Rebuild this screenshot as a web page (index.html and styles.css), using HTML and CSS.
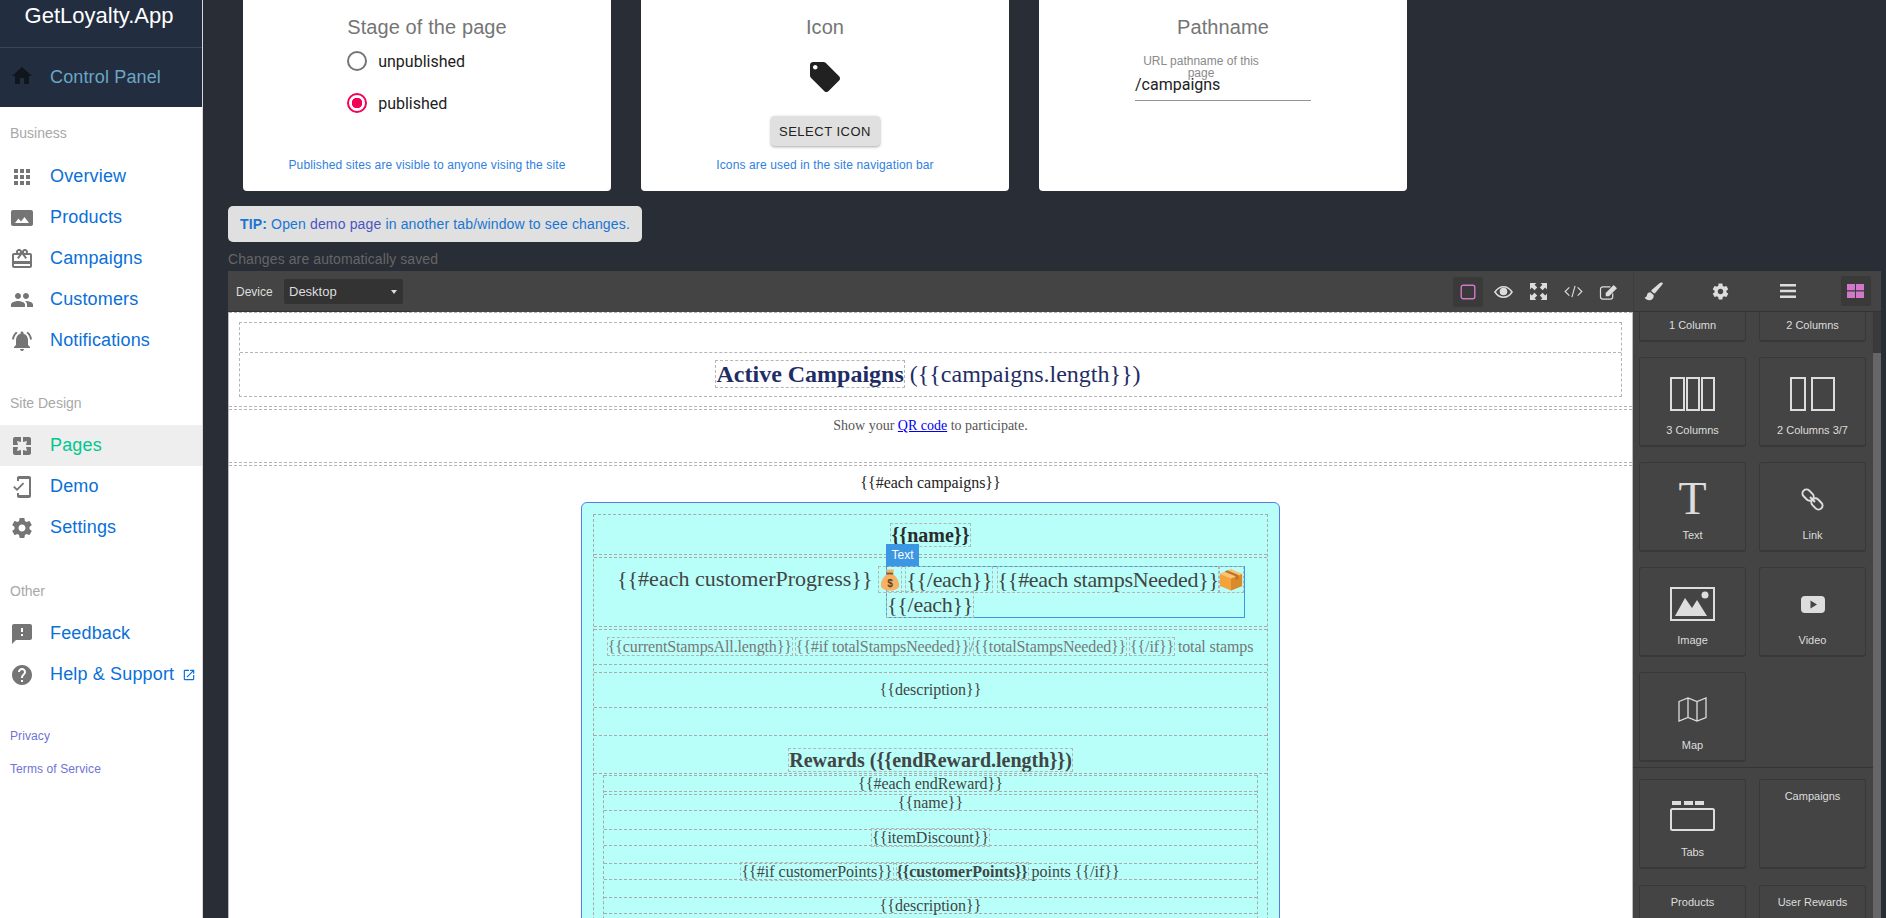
FILE: index.html
```html
<!DOCTYPE html>
<html lang="en">
<head>
    <meta charset="UTF-8">
    <title>GetLoyalty.App - Pages</title>
    <link rel="stylesheet" href="styles.css">
</head>
<body>
    <aside class="sidebar">
        <div class="brand">GetLoyalty.App</div>
        <a class="control-link">
            <svg class="nav-icon dark" viewBox="0 0 24 24"><path d="M10 20v-6h4v6h5v-8h3L12 3 2 12h3v8z"/></svg>
            Control Panel
        </a>

        <div class="nav-title first">Business</div>
        <a class="nav-item"><svg class="nav-icon" viewBox="0 0 24 24"><path d="M4 8h4V4H4v4zm6 12h4v-4h-4v4zm-6 0h4v-4H4v4zm0-6h4v-4H4v4zm6 0h4v-4h-4v4zm6-10v4h4V4h-4zm-6 4h4V4h-4v4zm6 6h4v-4h-4v4zm0 6h4v-4h-4v4z"/></svg>Overview</a>
        <a class="nav-item"><svg class="nav-icon" viewBox="0 0 24 24"><path d="M23 18V6c0-1.1-.9-2-2-2H3c-1.1 0-2 .9-2 2v12c0 1.1.9 2 2 2h18c1.1 0 2-.9 2-2zM8.5 12.5l2.5 3.01L14.5 11l4.5 6H5l3.5-4.5z"/></svg>Products</a>
        <a class="nav-item"><svg class="nav-icon" viewBox="0 0 24 24"><path d="M20 6h-2.18c.11-.31.18-.65.18-1 0-1.66-1.34-3-3-3-1.05 0-1.96.54-2.5 1.35l-.5.67-.5-.68C10.96 2.54 10.05 2 9 2 7.34 2 6 3.34 6 5c0 .35.07.69.18 1H4c-1.11 0-1.99.89-1.99 2L2 19c0 1.11.89 2 2 2h16c1.11 0 2-.89 2-2V8c0-1.11-.89-2-2-2zm-5-2c.55 0 1 .45 1 1s-.45 1-1 1-1-.45-1-1 .45-1 1-1zM9 4c.55 0 1 .45 1 1s-.45 1-1 1-1-.45-1-1 .45-1 1-1zm11 15H4v-2h16v2zm0-5H4V8h5.08L7 10.83 8.62 12 11 8.76l1-1.36 1 1.36L15.38 12 17 10.83 14.92 8H20v6z"/></svg>Campaigns</a>
        <a class="nav-item"><svg class="nav-icon" viewBox="0 0 24 24"><path d="M16 11c1.66 0 2.99-1.34 2.99-3S17.66 5 16 5c-1.66 0-3 1.34-3 3s1.34 3 3 3zm-8 0c1.66 0 2.99-1.34 2.99-3S9.66 5 8 5C6.34 5 5 6.34 5 8s1.34 3 3 3zm0 2c-2.33 0-7 1.17-7 3.5V19h14v-2.5c0-2.33-4.67-3.5-7-3.5zm8 0c-.29 0-.62.02-.97.05 1.16.84 1.97 1.97 1.97 3.45V19h6v-2.5c0-2.33-4.67-3.5-7-3.5z"/></svg>Customers</a>
        <a class="nav-item"><svg class="nav-icon" viewBox="0 0 24 24"><path d="M7.58 4.08L6.15 2.65C3.75 4.48 2.17 7.3 2.03 10.5h2c.15-2.65 1.51-4.97 3.55-6.42zm12.39 6.42h2c-.15-3.2-1.73-6.02-4.12-7.85l-1.42 1.43c2.02 1.45 3.39 3.77 3.54 6.42zM18 11c0-3.07-1.64-5.64-4.5-6.32V4c0-.83-.67-1.5-1.5-1.5s-1.5.67-1.5 1.5v.68C7.63 5.36 6 7.92 6 11v5l-2 2v1h16v-1l-2-2v-5zm-6 11c.14 0 .27-.01.4-.04.65-.14 1.18-.58 1.44-1.18.1-.24.15-.5.15-.78h-4c.01 1.1.9 2 2.01 2z"/></svg>Notifications</a>

        <div class="nav-title">Site Design</div>
        <a class="nav-item active"><svg class="nav-icon" viewBox="0 0 24 24"><path d="M3 5v6h5L7 7l4 1V3H5c-1.1 0-2 .9-2 2zm5 8H3v6c0 1.1.9 2 2 2h6v-5l-4 1 1-4zm9 4l-4-1v5h6c1.1 0 2-.9 2-2v-6h-5l1 4zm2-14h-6v5l4-1-1 4h5V5c0-1.1-.9-2-2-2z"/></svg>Pages</a>
        <a class="nav-item"><svg class="nav-icon" viewBox="0 0 24 24"><path d="M19 1H9c-1.1 0-2 .9-2 2v3h2V4h10v16H9v-2H7v3c0 1.1.9 2 2 2h10c1.1 0 2-.9 2-2V3c0-1.1-.9-2-2-2zM7.01 13.47l-2.55-2.55-1.27 1.27L7 16l7.19-7.19-1.27-1.27z"/></svg>Demo</a>
        <a class="nav-item"><svg class="nav-icon" viewBox="0 0 24 24"><path d="M19.43 12.98c.04-.32.07-.64.07-.98s-.03-.66-.07-.98l2.11-1.65c.19-.15.24-.42.12-.64l-2-3.46c-.12-.22-.39-.3-.61-.22l-2.49 1c-.52-.4-1.08-.73-1.69-.98l-.38-2.65C14.46 2.18 14.25 2 14 2h-4c-.25 0-.46.18-.49.42l-.38 2.65c-.61.25-1.17.59-1.69.98l-2.49-1c-.23-.09-.49 0-.61.22l-2 3.46c-.13.22-.07.49.12.64l2.11 1.65c-.04.32-.07.65-.07.98s.03.66.07.98l-2.11 1.65c-.19.15-.24.42-.12.64l2 3.46c.12.22.39.3.61.22l2.49-1c.52.4 1.08.73 1.69.98l.38 2.65c.03.24.24.42.49.42h4c.25 0 .46-.18.49-.42l.38-2.65c.61-.25 1.17-.59 1.69-.98l2.49 1c.23.09.49 0 .61-.22l2-3.46c.12-.22.07-.49-.12-.64l-2.11-1.65zM12 15.5c-1.93 0-3.5-1.57-3.5-3.5s1.57-3.5 3.5-3.5 3.5 1.57 3.5 3.5-1.57 3.5-3.5 3.5z"/></svg>Settings</a>

        <div class="nav-title other">Other</div>
        <a class="nav-item"><svg class="nav-icon" viewBox="0 0 24 24"><path d="M20 2H4c-1.1 0-1.99.9-1.99 2L2 22l4-4h14c1.1 0 2-.9 2-2V4c0-1.1-.9-2-2-2zm-7 12h-2v-2h2v2zm0-4h-2V6h2v4z"/></svg>Feedback</a>
        <a class="nav-item"><svg class="nav-icon" viewBox="0 0 24 24"><path d="M12 2C6.48 2 2 6.48 2 12s4.48 10 10 10 10-4.48 10-10S17.52 2 12 2zm1 17h-2v-2h2v2zm2.07-7.75l-.9.92C13.45 12.9 13 13.5 13 15h-2v-.5c0-1.1.45-2.1 1.17-2.83l1.24-1.26c.37-.36.59-.86.59-1.41 0-1.1-.9-2-2-2s-2 .9-2 2H8c0-2.21 1.79-4 4-4s4 1.79 4 4c0 .88-.36 1.68-.93 2.25z"/></svg>Help &amp; Support<svg class="ext-icon" viewBox="0 0 24 24"><path d="M19 19H5V5h7V3H5c-1.11 0-2 .89-2 2v14c0 1.1.89 2 2 2h14c1.1 0 2-.9 2-2v-7h-2v7zM14 3v2h3.59l-9.83 9.83 1.41 1.41L19 6.41V10h2V3h-7z"/></svg></a>

        <a class="small-link privacy">Privacy</a>
        <a class="small-link">Terms of Service</a>
    </aside>

    <main class="main">
        <section class="cards">
            <div class="card">
                <div class="stage">
                    <h3 class="card-title">Stage of the page</h3>
                    <div class="radio-row"><span class="radio"></span>unpublished</div>
                    <div class="radio-row"><span class="radio checked"></span>published</div>
                </div>
                <p class="card-help">Published sites are visible to anyone vising the site</p>
            </div>
            <div class="card">
                <h3 class="card-title">Icon</h3>
                <svg class="tag-icon" viewBox="0 0 24 24"><path d="M21.41 11.58l-9-9C12.05 2.22 11.55 2 11 2H4c-1.1 0-2 .9-2 2v7c0 .55.22 1.05.59 1.42l9 9c.36.36.86.58 1.41.58.55 0 1.05-.22 1.41-.59l7-7c.37-.36.59-.86.59-1.41 0-.55-.23-1.06-.59-1.42zM5.5 7C4.67 7 4 6.33 4 5.5S4.67 4 5.5 4 7 4.67 7 5.5 6.33 7 5.5 7z"/></svg>
                <button class="select-btn">SELECT ICON</button>
                <p class="card-help">Icons are used in the site navigation bar</p>
            </div>
            <div class="card">
                <h3 class="card-title">Pathname</h3>
                <div class="path-field">
                    <label class="path-label">URL pathname of this page</label>
                    <input class="path-input" type="text" value="/campaigns">
                </div>
            </div>
        </section>

        <div class="tip"><b>TIP:</b>&nbsp;Open <span class="tip-link">demo page</span> in another tab/window to see changes.</div>
        <div class="saved">Changes are automatically saved</div>

        <section class="editor">
            <div class="editor-left">
                <div class="toolbar">
                    <span class="device-label">Device</span>
                    <div class="device-select">Desktop</div>
                    <div class="tool-group">
                        <span class="tool on">
                            <svg viewBox="0 0 16 16" width="16" height="16"><rect x="1.2" y="1.2" width="13.6" height="13.6" rx="2" fill="none" stroke="#d278c9" stroke-width="1.4"/></svg>
                        </span>
                        <span class="tool">
                            <svg viewBox="0 0 20 14" width="19" height="14"><path d="M1 7c2.500-3.700 5.500-5.500 9-5.500s6.500 1.800 9 5.500c-2.500 3.700-5.500 5.500-9 5.500S3.500 10.700 1 7z" fill="none" stroke="#ddd" stroke-width="1.600"/><circle cx="10" cy="6.500" r="4" fill="#ddd"/></svg>
                        </span>
                        <span class="tool">
                            <svg viewBox="0 0 16 16" width="17" height="17"><path d="M0 0h6L4.300 1.700 6.800 4.200 4.200 6.800 1.700 4.300 0 6zM16 0v6l-1.700-1.700-2.500 2.500-2.600-2.600 2.500-2.500L10 0zM0 16v-6l1.700 1.700 2.500-2.500 2.600 2.600-2.500 2.500L6 16zM16 16h-6l1.700-1.700-2.500-2.500 2.600-2.600 2.500 2.500L16 10z" fill="#ddd"/></svg>
                        </span>
                        <span class="tool">
                            <svg viewBox="0 0 20 14" width="19" height="13"><path d="M5.500 2.500 1 7l4.500 4.500M14.500 2.500 19 7l-4.500 4.500M11.700 1 8.300 13" fill="none" stroke="#ddd" stroke-width="1.200"/></svg>
                        </span>
                        <span class="tool">
                            <svg viewBox="0 0 20 17" width="19" height="16"><path d="M12 3H4a2.500 2.500 0 0 0-2.500 2.500v8A2.500 2.500 0 0 0 4 16h8a2.500 2.500 0 0 0 2.500-2.500V10" fill="none" stroke="#ddd" stroke-width="1.300"/><path d="M7 9.500 15.500 1 19 4.500 10.500 13H7z" fill="#ddd"/></svg>
                        </span>
                    </div>
                </div>

                <div class="canvas">
                    <div class="sec sec-head">
                        <div class="head-box">
                            <div class="head-empty"></div>
                            <div class="head-title"><b class="mark">Active Campaigns</b> ({{campaigns.length}})</div>
                        </div>
                    </div>
                    <div class="sec sec-qr">
                        <p class="qr-text">Show your <a class="qr-link">QR code</a> to participate.</p>
                    </div>
                    <div class="sec-list">
                        <div class="each-line">{{#each campaigns}}</div>
                        <div class="camp-card">
                            <div class="camp-rows">
                                <div class="row row-name"><b class="mark">{{name}}</b></div>
                                <div class="row row-progress">
                                    <span class="progress-left">{{#each customerProgress}}</span>
                                    <div class="selected">
                                        <span class="selected-tag">Text</span>
                                        <span class="mark emoji-box bag-box">
                                            <svg class="emoji" viewBox="0 0 24 26"><path d="M9 7 7.500 2h9L15 7c4 3 7 7.500 7 12 0 4-4 6-10 6S2 23 2 19c0-4.500 3-9 7-12z" fill="#f5b265"/><rect x="8.500" y="5.500" width="7" height="2" fill="#7a5a3a"/><text x="12" y="21" class="emoji-sign">$</text></svg>
                                        </span>
                                        <span class="mark">{{/each}}</span> <span class="mark">{{#each stampsNeeded}}</span><span class="mark emoji-box">
                                            <svg class="emoji" viewBox="0 0 26 26"><path d="M13 2 25 7v13l-12 5-12-5V7z" fill="#f2a33c"/><path d="M13 12 25 7v13l-12 5z" fill="#d98a2b"/><path d="M1 7l12 5 12-5-12-5z" fill="#f9c476"/><path d="M6 4.500 18 9.500v4l3-1.300V8L9 3z" fill="#b9762a"/></svg>
                                        </span><br><span class="mark">{{/each}}</span>
                                    </div>
                                </div>
                                <div class="row row-stamps"><span class="mark">{{currentStampsAll.length}}</span> <span class="mark">{{#if totalStampsNeeded}}</span>/<span class="mark">{{totalStampsNeeded}}</span> <span class="mark">{{/if}}</span> total stamps</div>
                                <div class="row row-desc">{{description}}</div>
                                <div class="row row-rewards"><b class="mark">Rewards ({{endReward.length}})</b></div>
                                <div class="reward-box">
                                    <div class="reward-row first-row">{{#each endReward}}</div>
                                    <div class="reward-row">{{name}}</div>
                                    <div class="reward-row spaced"><span class="mark">{{itemDiscount}}</span></div>
                                    <div class="reward-row spaced"><span class="mark">{{#if customerPoints}}</span> <b class="mark">{{customerPoints}}</b> points {{/if}}</div>
                                    <div class="reward-row spaced">{{description}}</div>
                                </div>
                            </div>
                        </div>
                    </div>
                </div>
            </div>

            <div class="panel">
                <div class="panel-bar">
                    <span class="tool">
                        <svg viewBox="0 0 18 18" width="19" height="19"><path d="M17.500.8c-.8-.7-1.800-.5-2.800.3L7.500 7.300c-.4.400-.6.800-.7 1.300l2.800 2.400c.500-.1.900-.3 1.200-.7l6.400-7.800c.7-.8 1-1.500.3-1.700zM6 9.700c-1.800 0-3 1.200-3.200 2.800-.2 1.300-1 2-2.300 2.200 1.200 2 3.200 2.800 5.200 2.500 2.500-.4 3.800-2.200 3.400-4.800z" fill="#ddd"/></svg>
                    </span>
                    <span class="tool">
                        <svg viewBox="0 0 24 24" width="19" height="19"><path d="M19.430 12.980c.04-.32.07-.64.07-.98s-.03-.66-.07-.98l2.110-1.650c.19-.15.24-.42.12-.64l-2-3.460c-.12-.22-.39-.3-.61-.22l-2.490 1c-.52-.4-1.080-.73-1.690-.98l-.38-2.650C14.460 2.180 14.250 2 14 2h-4c-.25 0-.46.18-.49.42l-.38 2.650c-.61.25-1.170.59-1.690.98l-2.490-1c-.23-.09-.49 0-.61.22l-2 3.460c-.13.22-.07.49.12.64l2.110 1.650c-.04.32-.07.65-.07.98s.03.66.07.98l-2.110 1.650c-.19.15-.24.42-.12.64l2 3.460c.12.22.39.3.61.22l2.490-1c.52.4 1.080.73 1.690.98l.38 2.650c.03.24.24.42.49.42h4c.25 0 .46-.18.49-.42l.38-2.650c.61-.25 1.170-.59 1.690-.98l2.490 1c.23.09.49 0 .61-.22l2-3.460c.12-.22.07-.49-.12-.64l-2.110-1.650zM12 15.500c-1.930 0-3.500-1.570-3.500-3.500s1.570-3.500 3.500-3.500 3.500 1.570 3.500 3.500-1.570 3.500-3.500 3.500z" fill="#ddd"/></svg>
                    </span>
                    <span class="tool">
                        <svg viewBox="0 0 16 14" width="16" height="14"><path d="M0 0h16v2.500H0zM0 5.700h16v2.500H0zM0 11.400h16v2.500H0z" fill="#ddd"/></svg>
                    </span>
                    <span class="tool on">
                        <svg viewBox="0 0 17 14" width="17" height="14"><path d="M0 0h8v6.300H0zM9 0h8v6.300H9zM0 7.500h8V14H0zM9 7.500h8V14H9z" fill="#d278c9"/></svg>
                    </span>
                </div>
                <div class="panel-body">
                    <div class="blocks">
                        <div class="blocks-grid scrolled">
                            <div class="block"><span class="block-icon"></span>1 Column</div>
                            <div class="block"><span class="block-icon"></span>2 Columns</div>
                            <div class="block"><span class="block-icon">
                                <svg viewBox="0 0 45 34" width="45" height="34"><path d="M1 1h13v32H1zM17 1h12v32H17zM32 1h12v32H32z" class="line"/></svg>
                            </span>3 Columns</div>
                            <div class="block"><span class="block-icon">
                                <svg viewBox="0 0 45 34" width="45" height="34"><path d="M1 1h14v32H1zM22 1h22v32H22z" class="line"/></svg>
                            </span>2 Columns 3/7</div>
                            <div class="block"><span class="block-icon"><span class="t-glyph">T</span></span>Text</div>
                            <div class="block"><span class="block-icon">
                                <svg viewBox="0 0 23 23" width="23" height="23"><g class="line" transform="rotate(45 11.500 11.500)"><rect x="-1" y="7.500" width="12.500" height="8" rx="4"/><rect x="11.500" y="7.500" width="12.500" height="8" rx="4"/><path d="M8 11.500h7"/></g></svg>
                            </span>Link</div>
                            <div class="block"><span class="block-icon">
                                <svg viewBox="0 0 45 34" width="45" height="34"><path d="M1 1h43v32H1z" class="line"/><path d="M5 29 15 11l7 10 5-8 10 16z" fill="#ddd"/><circle cx="35" cy="8" r="3.500" fill="#ddd"/></svg>
                            </span>Image</div>
                            <div class="block"><span class="block-icon">
                                <svg viewBox="0 0 24 17" width="24" height="17"><rect width="24" height="17" rx="4" fill="#ddd"/><path d="M9.500 4.500 16 8.500 9.500 12.500z" fill="#444"/></svg>
                            </span>Video</div>
                            <div class="block"><span class="block-icon">
                                <svg viewBox="0 0 29 25" width="29" height="25"><path d="M1 4.500 10 1l9 3.500L28 1v19.500L19 24l-9-3.500L1 24zM10 1v19.500M19 4.500V24" class="line thin"/></svg>
                            </span>Map</div>
                        </div>
                        <div class="blocks-grid second">
                            <div class="block"><span class="block-icon">
                                <svg viewBox="0 0 45 30" width="45" height="30"><path d="M2 0h9v4H2zM14 0h9v4h-9zM25 0h9v4h-9z" fill="#ddd"/><rect x="1" y="8" width="43" height="21" rx="1.500" class="line"/></svg>
                            </span>Tabs</div>
                            <div class="block plain">Campaigns</div>
                            <div class="block plain">Products</div>
                            <div class="block plain">User Rewards</div>
                        </div>
                    </div>
                    <div class="scrollbar"><div class="scroll-thumb"></div></div>
                </div>
            </div>
        </section>
    </main>
</body>
</html>
```

FILE: styles.css
```css
* {
    box-sizing: border-box;
}

html, body {
    height: 100%;
}

body {
    margin: 0;
    display: flex;
    height: 918px;
    overflow: hidden;
    background: #292d36;
    font-family: "Liberation Sans", Arial, sans-serif;
    color: #333;
}

/* sidebar */
.sidebar {
    width: 203px;
    flex-shrink: 0;
    background: #ffffff;
    border-right: 1px solid #d8d8d8;
    display: flex;
    flex-direction: column;
}

.brand {
    height: 48px;
    padding-right: 4px;
    background: #222d3f;
    border-bottom: 1px solid #3a4658;
    color: #ffffff;
    font-size: 22px;
    line-height: 31px;
    text-align: center;
}

.control-link {
    height: 59px;
    display: flex;
    align-items: center;
    background: #222d3f;
    color: #6ba6c4;
    font-size: 18px;
    letter-spacing: 0.15px;
}

.nav-icon {
    width: 24px;
    height: 24px;
    margin: 0 16px 0 10px;
    fill: #757575;
    flex-shrink: 0;
}

.nav-icon.dark {
    fill: #11151c;
    margin-top: -4px;
}

.nav-title {
    margin: 34px 0 14px 10px;
    height: 16px;
    font-size: 14px;
    line-height: 16px;
    color: #a8a8a8;
}

.nav-title.first {
    margin-top: 18px;
    margin-bottom: 15px;
}

.nav-title.other {
    margin-top: 35px;
    margin-bottom: 14px;
}

.nav-item {
    height: 41px;
    display: flex;
    align-items: center;
    color: #0a6fd8;
    font-size: 18px;
    letter-spacing: 0.15px;
}

.nav-item.active {
    background: #eeeeee;
    color: #00c78f;
}

.ext-icon {
    width: 14px;
    height: 14px;
    margin-left: 8px;
    fill: #0a6fd8;
}

.small-link {
    margin: 19px 0 0 10px;
    height: 14px;
    font-size: 12px;
    letter-spacing: 0.1px;
    line-height: 14px;
    color: #6f73d6;
}

.small-link.privacy {
    margin-top: 34px;
}

/* main */
.main {
    flex: 1;
    min-width: 0;
    padding-left: 25px;
    display: flex;
    flex-direction: column;
}

.cards {
    margin-left: 15px;
    display: flex;
    gap: 30px;
    height: 191px;
}

.card {
    width: 368px;
    background: #ffffff;
    border-radius: 0 0 4px 4px;
    display: flex;
    flex-direction: column;
    align-items: center;
    padding-top: 15px;
    position: relative;
}

.stage {
    display: flex;
    flex-direction: column;
}

.card-title {
    margin: 0;
    font-size: 20px;
    font-weight: 400;
    letter-spacing: 0.1px;
    line-height: 24px;
    color: #757575;
}

.radio-row {
    height: 42px;
    display: flex;
    align-items: center;
    font-family: Roboto, sans-serif;
    font-size: 16px;
    color: #222;
}

.stage .card-title {
    margin-bottom: 1px;
}

.radio {
    width: 20px;
    height: 20px;
    margin-right: 11px;
    border: 2px solid #757575;
    border-radius: 50%;
}

.radio.checked {
    border-color: #f50057;
    background: radial-gradient(circle, #f50057 0 5px, transparent 5.500px);
}

.card-help {
    margin: auto 0 19px;
    font-size: 12px;
    letter-spacing: 0.13px;
    line-height: 14px;
    color: #2f7fe0;
    white-space: nowrap;
}

.tag-icon {
    width: 36px;
    height: 36px;
    margin-top: 20px;
    fill: #212121;
}

.select-btn {
    width: 109px;
    height: 30px;
    margin-top: 21px;
    border: none;
    border-radius: 4px;
    background: #e0e0e0;
    box-shadow: 0 1px 3px rgba(0,0,0,0.35);
    font-family: "Liberation Sans", Arial, sans-serif;
    font-size: 13px;
    letter-spacing: 0.5px;
    color: #222;
}

.path-field {
    position: relative;
    width: 176px;
    margin-top: 16px;
}

.path-label {
    position: absolute;
    top: 0;
    left: 0;
    width: 132px;
    font-size: 12px;
    line-height: 12px;
    text-align: center;
    color: #8a8a8a;
}

.path-input {
    width: 100%;
    height: 46px;
    padding: 19px 0 6px;
    border: none;
    border-bottom: 1px solid #949494;
    background: transparent;
    font-family: Roboto, sans-serif;
    font-size: 16px;
    color: #222;
    outline: none;
}

.tip {
    width: 414px;
    height: 36px;
    margin-top: 15px;
    padding-left: 12px;
    display: flex;
    align-items: center;
    background: #e0e0e0;
    border-radius: 5px;
    font-size: 14px;
    letter-spacing: 0.15px;
    color: #1976d2;
    white-space: pre;
}

.tip-link {
    color: #4a55c0;
}

.saved {
    margin-top: 8px;
    height: 21px;
    font-size: 14px;
    letter-spacing: 0.1px;
    line-height: 19px;
    color: #666666;
}

/* editor */
.editor {
    width: 1653px;
    height: 647px;
    display: flex;
    background: #444444;
}

.editor-left {
    width: 1405px;
    display: flex;
    flex-direction: column;
}

.toolbar {
    position: relative;
    height: 41px;
    flex-shrink: 0;
    display: flex;
    align-items: center;
    padding-left: 8px;
    color: #dddddd;
}

/* dark line under the device picker */
.toolbar::after {
    content: "";
    position: absolute;
    left: 0;
    bottom: 0;
    width: 183px;
    height: 1px;
    background: #333333;
}

.device-label {
    font-size: 12px;
    width: 48px;
}

.device-select {
    position: relative;
    width: 119px;
    height: 25px;
    padding-left: 5px;
    background: #333333;
    border-radius: 2px;
    font-size: 13px;
    line-height: 25px;
}

.device-select::after {
    content: "";
    position: absolute;
    right: 6px;
    top: 11px;
    border-left: 3.500px solid transparent;
    border-right: 3.500px solid transparent;
    border-top: 4px solid #dddddd;
}

.tool-group {
    margin-left: auto;
    display: flex;
    gap: 5px;
    padding-right: 10px;
}

.tool {
    width: 30px;
    height: 30px;
    display: flex;
    align-items: center;
    justify-content: center;
    border-radius: 2px;
}

.tool.on {
    background: #3a3a3a;
}

/* canvas */
.canvas {
    flex: 1;
    min-height: 0;
    overflow: hidden;
    background: #ffffff;
    border-left: 1px solid #bbb;
    border-right: 1px solid #bbb;
    font-family: "Liberation Serif", "Times New Roman", serif;
}

.sec {
    border-top: 1px dashed #b5b5b5;
    border-bottom: 1px dashed #b5b5b5;
    margin-bottom: 2px;
}

.sec-head {
    height: 95px;
    padding: 9px 10px;
}

.head-box {
    border: 1px dashed #b5b5b5;
    height: 75px;
}

.head-empty {
    height: 30px;
    border-bottom: 1px dashed #b5b5b5;
}

.head-title {
    text-align: center;
    font-size: 24px;
    line-height: 28px;
    padding: 7px 4px 0 0;
    color: #1f2d66;
}

.mark {
    outline: 1px dashed #b5b5b5;
    outline-offset: 0;
}

.sec-qr {
    height: 54px;
    padding-top: 7px;
}

.qr-text {
    margin: 0;
    text-align: center;
    font-size: 14px;
    line-height: 17px;
    color: #555555;
}

.qr-link {
    color: #0000ee;
    text-decoration: underline;
}

.sec-list {
    border-top: 1px dashed #b5b5b5;
}

.each-line {
    text-align: center;
    font-size: 16px;
    line-height: 18px;
    padding-top: 8px;
    height: 36px;
    color: #222;
}

.camp-card {
    width: 699px;
    margin: 0 auto;
    padding: 11px 11px 0;
    height: 500px;
    background: #b8fffa;
    border: 1px solid #5a78f0;
    border-radius: 6px;
    color: #444444;
}

.camp-rows {
    border: 1px dashed #a9a9a9;
    border-bottom: none;
}

.row {
    border-bottom: 1px dashed #a9a9a9;
    text-align: center;
}

.row-name {
    height: 40px;
    margin-bottom: 2px;
    font-size: 20px;
    line-height: 23px;
    padding-top: 9px;
    color: #2b2b2b;
}

.row-progress {
    height: 70px;
    margin-bottom: 2px;
    border-top: 1px dashed #a9a9a9;
    padding: 8px 22px 0 23px;
    display: flex;
    text-align: left;
    font-size: 22px;
    line-height: 25px;
    white-space: nowrap;
}

.selected {
    position: relative;
    width: 359px;
    height: 52px;
    margin-left: auto;
    border: 1px solid #3b97e3;
    letter-spacing: -0.28px;
}

.selected-tag {
    position: absolute;
    left: -1px;
    top: -23px;
    width: 33px;
    height: 22px;
    background: #3b97e3;
    color: #ffffff;
    font-family: "Liberation Sans", Arial, sans-serif;
    font-size: 12px;
    letter-spacing: 0;
    line-height: 22px;
    text-align: center;
}

.emoji-box {
    display: inline-block;
    vertical-align: top;
    width: 24px;
    height: 25px;
    text-align: center;
}

.bag-box {
    width: 22px;
    margin-left: -8px;
}

.emoji {
    width: 24px;
    height: 25px;
    display: block;
}

.bag-box .emoji {
    width: 22px;
}

.emoji-sign {
    font-family: "Liberation Sans", Arial, sans-serif;
    font-size: 11px;
    font-weight: bold;
    text-anchor: middle;
    fill: #5a4020;
}

.row-stamps {
    height: 36px;
    border-top: 1px dashed #a9a9a9;
    padding-top: 8px;
    font-size: 16px;
    letter-spacing: -0.13px;
    line-height: 18px;
    color: #777777;
    white-space: nowrap;
}

.row-desc {
    height: 36px;
    margin-top: 7px;
    border-top: 1px dashed #a9a9a9;
    padding-top: 8px;
    font-size: 16px;
    line-height: 18px;
}

.row-rewards {
    height: 39px;
    margin-top: 27px;
    border-top: 1px dashed #a9a9a9;
    border-bottom: 1px dashed #a9a9a9;
    padding-top: 13px;
    font-size: 20px;
    line-height: 23px;
}

.reward-box {
    margin: 1px 9px 0;
    border-left: 1px dashed #a9a9a9;
    border-right: 1px dashed #a9a9a9;
    height: 200px;
}

.reward-row {
    height: 17px;
    margin-bottom: 2px;
    border-top: 1px dashed #a9a9a9;
    border-bottom: 1px dashed #a9a9a9;
    text-align: center;
    font-size: 16px;
    line-height: 15px;
    white-space: nowrap;
}

.reward-row.spaced {
    margin-top: 17px;
}

.reward-row:nth-child(3) {
    margin-top: 18px;
}

/* right panel */
.panel {
    width: 248px;
    display: flex;
    flex-direction: column;
}

.panel-bar {
    height: 41px;
    flex-shrink: 0;
    border-bottom: 1px solid #333;
    border-left: 1px solid #3d3d3d;
    display: flex;
    align-items: center;
    justify-content: space-between;
    padding: 0 10px 0 4px;
}

.panel-body {
    flex: 1;
    min-height: 0;
    display: flex;
}

.blocks {
    flex: 1;
    overflow: hidden;
}

.blocks-grid {
    display: grid;
    grid-template-columns: 107px 107px;
    grid-auto-rows: 90px;
    column-gap: 13px;
    row-gap: 15px;
    padding-left: 6px;
}

.blocks-grid.scrolled {
    margin-top: -60px;
    padding-bottom: 5px;
    border-bottom: 1px solid #353535;
}

.blocks-grid.second {
    margin-top: 11px;
    row-gap: 16px;
}

.block {
    padding-top: 10px;
    background: #444444;
    border: 1px solid #383838;
    border-bottom-width: 2px;
    border-radius: 3px;
    display: flex;
    flex-direction: column;
    align-items: center;
    font-size: 11px;
    line-height: 14px;
    color: #dddddd;
}

.block.plain {
    padding-top: 9px;
}

.block-icon {
    height: 52px;
    margin-bottom: 3px;
    display: flex;
    align-items: center;
    justify-content: center;
}

.line {
    fill: none;
    stroke: #dddddd;
    stroke-width: 2;
}

.line.thin {
    stroke-width: 1.300;
}

.t-glyph {
    font-family: "Liberation Serif", serif;
    font-size: 46px;
    line-height: 46px;
    color: #dddddd;
}

.scrollbar {
    width: 8px;
    background: #3a3a3a;
    padding-top: 41px;
}

.scroll-thumb {
    height: 100%;
    background: #666666;
}
```
